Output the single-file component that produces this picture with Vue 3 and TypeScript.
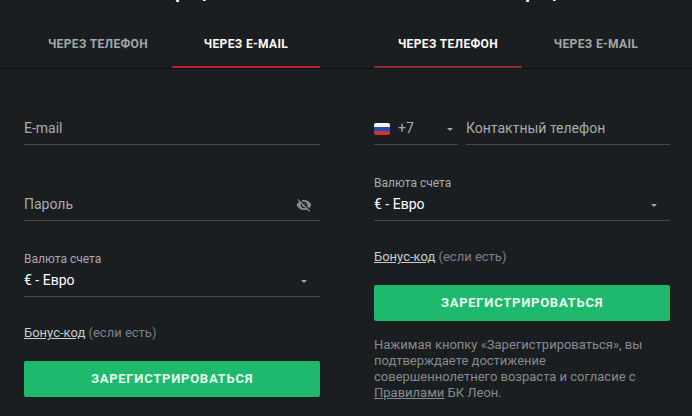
<script setup lang="ts">
interface Col {
  side: string
  phone: boolean
}
const cols: Col[] = [
  { side: 'left', phone: false },
  { side: 'right', phone: true },
]
</script>

<template>
  <div class="page">
    <section v-for="c in cols" :key="c.side" class="col" :class="c.side">
      <h1 class="title">Регистрация</h1>
      <div class="tabs-wrap">
        <div class="tabs">
          <div class="tab" :class="{ active: c.phone, dim: c.phone }">ЧЕРЕЗ ТЕЛЕФОН</div>
          <div class="tab" :class="{ active: !c.phone }">ЧЕРЕЗ E-MAIL</div>
        </div>
      </div>
      <div class="form">
        <template v-if="!c.phone">
          <div class="field"><span class="placeholder">E-mail</span></div>
          <div class="field">
            <span class="placeholder">Пароль</span>
            <svg class="eye" viewBox="0 0 24 24" width="16" height="16">
              <path fill="currentColor" d="M12 7c2.76 0 5 2.24 5 5 0 .65-.13 1.26-.36 1.83l2.92 2.92c1.51-1.26 2.7-2.89 3.43-4.75-1.73-4.39-6-7.5-11-7.5-1.4 0-2.74.25-3.98.7l2.16 2.16C10.74 7.13 11.35 7 12 7zM2 4.27l2.28 2.28.46.46C3.08 8.3 1.78 10.02 1 12c1.73 4.39 6 7.5 11 7.5 1.55 0 3.03-.3 4.38-.84l.42.42L19.73 22 21 20.73 3.27 3 2 4.27zM7.53 9.8l1.55 1.55c-.05.21-.08.43-.08.65 0 1.66 1.34 3 3 3 .22 0 .44-.03.65-.08l1.55 1.55c-.67.33-1.41.53-2.2.53-2.76 0-5-2.24-5-5 0-.79.2-1.53.53-2.2zm4.31-.78l3.15 3.15.02-.16c0-1.66-1.34-3-3-3l-.17.01z" />
            </svg>
          </div>
        </template>
        <div v-else class="phone-row">
          <div class="field code">
            <span class="flag"><i class="w"></i><i class="b"></i><i class="r"></i></span>
            <span class="dial">+7</span>
            <span class="caret"></span>
          </div>
          <div class="field number"><span class="placeholder">Контактный телефон</span></div>
        </div>
        <div class="field select">
          <span class="label">Валюта счета</span>
          <span class="value">€ - Евро</span>
          <span class="caret"></span>
        </div>
        <div class="bonus"><span class="bonus-link">Бонус-код</span> (если есть)</div>
        <button class="submit" type="button">ЗАРЕГИСТРИРОВАТЬСЯ</button>
        <p v-if="c.phone" class="note">
          Нажимая кнопку «Зарегистрироваться», вы<br />подтверждаете достижение<br />совершеннолетнего возраста и согласие с<br /><span class="rules">Правилами</span> БК Леон.
        </p>
      </div>
    </section>
  </div>
</template>

<style>
html,
body {
  margin: 0;
  background: #1a1e21;
}
</style>

<style scoped>
.page {
  width: 692px;
  height: 416px;
  overflow: hidden;
  display: grid;
  grid-template-columns: 346px 346px;
  background: #1a1e21;
  font-family: Roboto, "Liberation Sans", sans-serif;
}
.title {
  margin: -26px 0 0;
  height: 36px;
  line-height: 36px;
  font-size: 18px;
  font-weight: 700;
  color: #fff;
  text-align: center;
}
.left .title {
  padding-left: 24px;
  padding-right: 26px;
}
.right .title {
  padding-left: 28px;
  padding-right: 22px;
}
.tabs-wrap {
  height: 66px;
  border-bottom: 1px solid #0f1214;
  margin-top: -10px;
  padding-top: 2px;
}
.left .tabs {
  padding-left: 24px;
  padding-right: 26px;
}
.right .tabs {
  padding-left: 28px;
  padding-right: 22px;
}
.tabs {
  display: flex;
  height: 66px;
}
.tab {
  flex: 1;
  height: 66px;
  box-sizing: border-box;
  padding-top: 20px;
  display: flex;
  align-items: center;
  justify-content: center;
  font-size: 12px;
  font-weight: 700;
  letter-spacing: 0.35px;
  color: #a3a6a9;
  border-bottom: 2px solid transparent;
}
.tab.active {
  color: #fff;
  border-bottom-color: #b9202b;
}
.tab.dim {
  border-bottom-color: #8e2a2f;
}
.form {
  padding-top: 36px;
}
.left .form {
  padding-left: 24px;
  padding-right: 26px;
}
.right .form {
  padding-left: 28px;
  padding-right: 22px;
}
.field {
  position: relative;
  height: 40px;
  box-sizing: border-box;
  margin-bottom: 36px;
  border-bottom: 1px solid #45494c;
  display: flex;
  align-items: flex-end;
  padding-bottom: 6px;
  font-size: 14px;
  line-height: 20px;
}
.placeholder {
  color: #a8abae;
}
.eye {
  position: absolute;
  right: 8px;
  bottom: 7px;
  color: #8a8e92;
}
.phone-row {
  display: flex;
  gap: 8px;
}
.code {
  width: 84px;
  flex: none;
  align-items: flex-end;
}
.number {
  flex: 1;
}
.flag {
  width: 16px;
  height: 12px;
  margin-bottom: 3px;
  margin-right: 8px;
  border-radius: 2px;
  overflow: hidden;
  display: flex;
  flex-direction: column;
}
.flag i {
  flex: 1;
  display: block;
}
.flag .w {
  background: #f4f5f6;
}
.flag .b {
  background: #1f4fb0;
}
.flag .r {
  background: #cf3330;
}
.dial {
  color: #a8abae;
}
.caret {
  position: absolute;
  right: 13px;
  bottom: 13px;
  width: 0;
  height: 0;
  border-left: 3.5px solid transparent;
  border-right: 3.5px solid transparent;
  border-top: 3.5px solid #a3a6a9;
}
.code .caret {
  right: 5px;
}
.select {
  flex-direction: column;
  align-items: flex-start;
  justify-content: flex-end;
  margin-bottom: 28px;
}
.label {
  font-size: 12px;
  line-height: 16px;
  color: #a8abae;
  margin-bottom: 3px;
}
.value {
  color: #fff;
}
.bonus {
  height: 16px;
  line-height: 16px;
  font-size: 13px;
  color: #7d8185;
  margin-bottom: 20px;
}
.bonus-link {
  color: #c9cbcd;
  text-decoration: underline;
}
.submit {
  display: block;
  width: 100%;
  height: 36px;
  border: 0;
  padding: 0 0 2px;
  border-radius: 2px;
  background: #1fb96e;
  color: #e9fbf1;
  font-family: inherit;
  font-size: 13px;
  font-weight: 700;
  letter-spacing: 0.75px;
}
.note {
  margin: 16px 0 0;
  font-size: 13px;
  line-height: 16px;
  color: #868a8e;
}
.rules {
  text-decoration: underline;
}
</style>
